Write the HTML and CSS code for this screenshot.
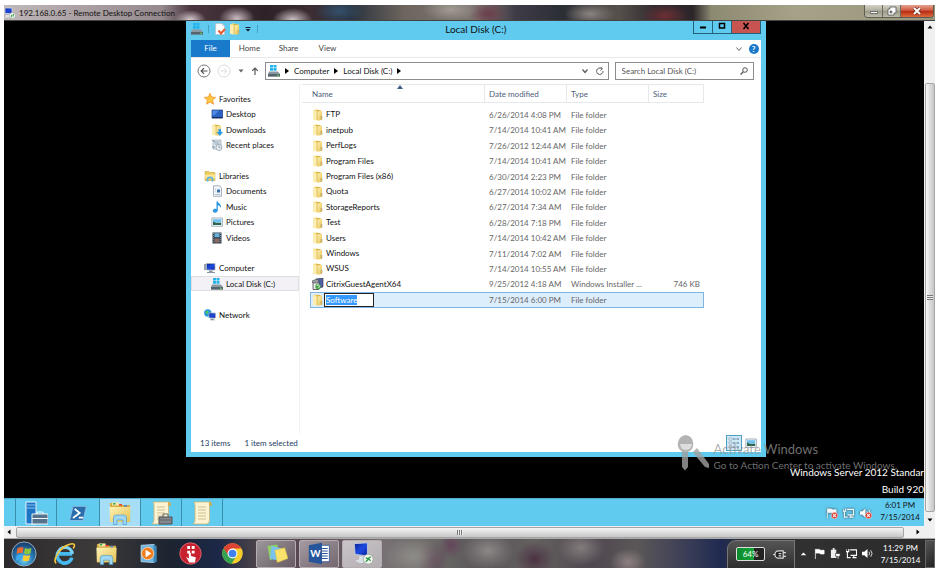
FILE: index.html
```html
<!DOCTYPE html>
<html lang="en">

<head>
    <meta charset="UTF-8">
    <meta name="viewport" content="width=device-width, initial-scale=1.0">
    <title>192.168.0.65 - Remote Desktop Connection</title>
    <link rel="stylesheet" href="styles.css">
</head>

<body>
    <!-- shared icons -->
    <svg class="sprite" aria-hidden="true">
        <defs>
            <linearGradient id="gold" x1="0" x2="1" y1="0" y2="1">
                <stop offset="0" stop-color="#fdf3b8" />
                <stop offset="1" stop-color="#e6c04c" />
            </linearGradient>
            <linearGradient id="screen" x1="0" x2="1" y1="0" y2="1">
                <stop offset="0" stop-color="#0a1c8c" />
                <stop offset=".5" stop-color="#1c4be0" />
                <stop offset="1" stop-color="#0b1f9e" />
            </linearGradient>
            <radialGradient id="orb" cx=".5" cy=".75" r=".7">
                <stop offset="0" stop-color="#6fd3f5" />
                <stop offset=".5" stop-color="#2b7cb8" />
                <stop offset="1" stop-color="#173f6e" />
            </radialGradient>
        </defs>
        <symbol id="folder" viewBox="0 0 12 12">
            <path d="M1.500 1l4-1v11l-4 0z" fill="#f3dc83" />
            <path d="M4.500 1h4v10h-4z" fill="#d9b348" />
            <path d="M1 1.500l3.500.8v9.500l-3.500-1z" fill="#fbeeb0" />
            <path d="M5.500 2.500l4.500-1v9.200l-4.500 1.300z" fill="url(#gold)" />
            <path d="M8.500 7h1.800v3.500H8.500z" fill="#c7b06b" />
        </symbol>
        <symbol id="drive" viewBox="0 0 12 12">
            <path d="M2 0h3v2.500H2zM5.500 0h3v2.500h-3zM2 3h3v2.700H2zM5.500 3h3v2.700h-3z" fill="#22b4ea" />
            <path d="M1 6.500h9l2 2.500v2.500H0V9z" fill="#8b98a3" />
            <path d="M0 9h12v2.500H0z" fill="#56636e" />
            <path d="M9 9.800h2v1H9z" fill="#5be04b" />
        </symbol>
        <symbol id="star" viewBox="0 0 12 12">
            <path d="M6 .3l1.600 3.700 4.100.4-3.100 2.700.9 4.100L6 9.100l-3.500 2.100.9-4.100L.3 4.400 4.400 4z" fill="#ffc640" stroke="#ea8a1c" stroke-width=".7" />
        </symbol>
        <symbol id="desktop" viewBox="0 0 12 12">
            <path d="M1 2h10.500v8H1z" fill="#2a62c4" stroke="#16407f" stroke-width=".7" />
            <path d="M1.500 2.500L8 2.500 3 7.500H1.500z" fill="#4f8be0" />
            <path d="M1 9h10.500v1.200H1z" fill="#152c5e" />
        </symbol>
        <symbol id="down" viewBox="0 0 12 12">
            <use href="#folder" width="12" height="12" />
            <path d="M7.500 5h2.500v3h2l-3.200 4L5.500 8h2z" fill="#2c9be8" />
        </symbol>
        <symbol id="recent" viewBox="0 0 12 12">
            <path d="M2 1h8v9H2z" fill="#dfe8ee" stroke="#9aa9b5" stroke-width=".7" />
            <path d="M3.500 3h5M3.500 5h5" stroke="#8296a8" stroke-width=".8" />
            <circle cx="8" cy="8.500" r="3" fill="#eef3f7" stroke="#8a9ba8" stroke-width=".8" />
            <path d="M8 6.800v1.900h1.500M1 1l3 2M1 8h3" stroke="#708494" stroke-width=".8" fill="none" />
        </symbol>
        <symbol id="libraries" viewBox="0 0 12 12">
            <path d="M1 1.500h4l1 1h5v8H1z" fill="#eccb58" stroke="#c39a35" stroke-width=".5" />
            <path d="M1 4.500h10v4H1z" fill="#fbe694" />
            <path d="M3.500 11.500V9a2.500 1.600 0 015 0v2.500" fill="none" stroke="#5fb2dd" stroke-width="1.800" />
        </symbol>
        <symbol id="document" viewBox="0 0 12 12">
            <path d="M2.500.8h6L10.500 3v8.300h-8z" fill="#f4f7fa" stroke="#8d9dac" stroke-width=".8" />
            <path d="M6 4.500h3v3H6z" fill="#3a6fa8" />
            <path d="M4 4h1M4 6h1M4 9.500h5" stroke="#9aabba" stroke-width=".7" />
        </symbol>
        <symbol id="music" viewBox="0 0 12 12">
            <path d="M5.500.5h1.300c.6 2 4 2.500 3 6.500C9 5 8 4.500 6.800 4.300v5c0 3-5 3-5 .6C1.800 8 4 7.500 5.500 8z" fill="#2d95e2" />
        </symbol>
        <symbol id="picture" viewBox="0 0 12 12">
            <path d="M.8 2h10.600v8.300H.8z" fill="#f8fafc" stroke="#8fa0b0" stroke-width=".8" />
            <path d="M2 3.200h8.200v3.300H2z" fill="#6cc1ee" />
            <path d="M2 5.500l3 1.200 5.200 0v2.300H2z" fill="#2b6552" />
        </symbol>
        <symbol id="video" viewBox="0 0 12 12">
            <path d="M1.500.5h9v11h-9z" fill="#33424f" />
            <path d="M3.500 1.200h5v4h-5z" fill="#68b2dc" />
            <path d="M3.500 6.500h5v4h-5z" fill="#8d6a66" />
            <path d="M2.500 1v10.500M9.500 1v10.500" stroke="#9fb0bd" stroke-width=".6" stroke-dasharray="1 1" />
        </symbol>
        <symbol id="computer" viewBox="0 0 12 12">
            <path d="M0 2h2v6H0z" fill="#98a2ad" />
            <path d="M2.500 1.500h8.500v6.500H2.500z" fill="url(#screen)" stroke="#a9b4c0" stroke-width=".8" />
            <path d="M5 8.500h3.500v1.500H11v1H3v-1h2z" fill="#8b95a1" />
        </symbol>
        <symbol id="network" viewBox="0 0 12 12">
            <circle cx="3.800" cy="4" r="3.700" fill="#2a9ae0" />
            <path d="M1.500 2.500l2.500-1 .5 2-2 2z" fill="#52c45a" />
            <path d="M5 4h6.500v5H5z" fill="url(#screen)" stroke="#a9b4c0" stroke-width=".7" />
            <path d="M7 9.500h2.500v1H11v.8H6v-.8h1z" fill="#8b95a1" />
        </symbol>
        <symbol id="installer" viewBox="0 0 12 12">
            <path d="M4 1l7-1v9l-6 1.500z" fill="#4e5fa8" stroke="#333" stroke-width=".6" />
            <path d="M1 4h6v7.500H1z" fill="#e6e9ec" stroke="#444" stroke-width=".8" />
            <path d="M0 3l5-2 2 2-1 2H1z" fill="#9aa0a6" stroke="#333" stroke-width=".5" />
            <circle cx="6" cy="8.500" r="2.700" fill="#4aa84c" />
            <path d="M5 8l1-1.500 1.500 2-1 1.500" stroke="#fff" stroke-width=".8" fill="none" />
        </symbol>
        <symbol id="props" viewBox="0 0 12 12">
            <path d="M1.500.5h6.500l2.500 2.500v8.500h-9z" fill="#fff" stroke="#b7bcc1" stroke-width=".7" />
            <path d="M8 .5V3h2.500z" fill="#cfd4d8" />
            <path d="M4.500 7.500l2.500 3 4-4.500" fill="none" stroke="#ea5a30" stroke-width="2" />
        </symbol>
        <symbol id="rdp" viewBox="0 0 12 12">
            <path d="M1 1h7v5.500H1z" fill="url(#screen)" stroke="#cfd8e4" stroke-width=".8" />
            <path d="M2 8h4v2.500H1z" fill="#dfe4ea" />
            <circle cx="8.500" cy="8.500" r="3" fill="#f2f5f2" stroke="#8a9a8a" stroke-width=".5" />
            <path d="M7 8l1.300 1L7 10.200M10 7L8.800 8.200 10 9.300" stroke="#2f9a41" fill="none" />
        </symbol>
        <symbol id="filefolder" viewBox="0 0 24 24">
            <path d="M2 2h8l1.500 2H22v17H2z" fill="#d7ac42" />
            <path d="M4 1.500h7v3H4z" fill="#f6e9a8" />
            <path d="M5 2.800h2.500" stroke="#37a548" stroke-width="1.500" />
            <path d="M11 3.800h3" stroke="#e8402f" stroke-width="1.500" />
            <path d="M16 4.800h3" stroke="#3b86d8" stroke-width="1.500" />
            <path d="M1.500 6h21l-.5 15H2z" fill="url(#gold)" />
            <path d="M5.500 23.500V17q0-3 3-3h7q3 0 3 3v6.500h-3.500V19H9v4.500z" fill="#9fd6f2" stroke="#4c9ccb" stroke-width=".7" />
        </symbol>
        <symbol id="scroll" viewBox="0 0 24 24">
            <path d="M4 1h17q-2 2-1.500 5v13q0 4-3 4H3q2-1.500 2-4V5q0-3-1-4z" fill="#fbf3d2" stroke="#cdb573" stroke-width=".8" />
            <path d="M19 1q3 0 3 3.500h-3z" fill="#d4a947" />
            <path d="M8 6h8M8 9h8M8 12h8M8 15h8M8 18h8" stroke="#ccbf93" />
        </symbol>
        <symbol id="flag" viewBox="0 0 12 12">
            <path d="M1.500 1v11M2 1.500h4l1 1h4v4H7l-1-1H2z" fill="currentColor" stroke="currentColor" stroke-width=".8" />
        </symbol>
        <symbol id="netplug" viewBox="0 0 12 12">
            <path d="M4.500 2h7v6h-6.500M7 10.500h4.500M8.500 8v2M0 1v3h3V1M1.500 4v6.500H5" fill="none" stroke="currentColor" stroke-width="1.200" />
        </symbol>
        <symbol id="speaker" viewBox="0 0 12 12">
            <path d="M0 4h2.500L6 1v10L2.500 8H0z" fill="currentColor" />
            <path d="M7.500 4q1.500 2 0 4M9.500 2.500q3 3.500 0 7" fill="none" stroke="currentColor" stroke-width=".9" />
        </symbol>
        <symbol id="error" viewBox="0 0 12 12">
            <circle cx="6" cy="6" r="5.500" fill="#dd3b32" stroke="#fff" stroke-width=".8" />
            <path d="M3.800 3.800l4.400 4.400M8.200 3.800L3.800 8.200" stroke="#fff" stroke-width="1.800" />
        </symbol>
    </svg>

    <div class="screen">
        <!-- remote desktop client title bar -->
        <header class="rdp-title">
            <svg class="icon"><use href="#rdp" /></svg>
            <span class="rdp-name">192.168.0.65 - Remote Desktop Connection</span>
            <div class="rdp-buttons">
                <button class="rdp-min" aria-label="Minimize"><svg viewBox="0 0 12 10"><path d="M2.500 5.500h7v2h-7z" fill="#fff" stroke="#555" stroke-width=".8" /></svg></button>
                <button class="rdp-max" aria-label="Restore"><svg viewBox="0 0 12 10"><path d="M4 1h6v6H8v2H2V3h2z" fill="#fff" stroke="#555" stroke-width=".8" /><path d="M4 5h2v2H4z" fill="#888" stroke="#555" stroke-width=".6" /></svg></button>
                <button class="rdp-close" aria-label="Close"><svg viewBox="0 0 12 10"><path d="M3 2l6 6M9 2L3 8" stroke="#6b2a20" stroke-width="3.200" /><path d="M3 2l6 6M9 2L3 8" stroke="#fff" stroke-width="2" /></svg></button>
            </div>
        </header>

        <div class="session">
            <div class="remote">
                <main class="desktop">
                    <!-- explorer window -->
                    <section class="explorer">
                        <div class="ex-title">
                            <div class="quick">
                                <svg class="icon"><use href="#drive" /></svg>
                                <i class="sep"></i>
                                <svg class="icon"><use href="#props" /></svg>
                                <svg class="icon"><use href="#folder" /></svg>
                                <svg class="icon small" viewBox="0 0 8 8"><path d="M1.500 2h5v1h-5zM1.500 4h5L4 6.500z" fill="#123" /></svg>
                                <i class="sep"></i>
                            </div>
                            <h1>Local Disk (C:)</h1>
                            <div class="ex-buttons">
                                <button aria-label="Minimize"><svg viewBox="0 0 10 8"><path d="M2 4.500h6v2H2z" /></svg></button>
                                <button aria-label="Maximize"><svg viewBox="0 0 10 8"><path d="M2.500 1.500h5v4.500h-5z" fill="none" stroke="#000" stroke-width="1.500" /></svg></button>
                                <button class="close" aria-label="Close"><svg viewBox="0 0 10 8"><path d="M2.500 1l5 6M7.500 1l-5 6" stroke="#000" stroke-width="1.600" /></svg></button>
                            </div>
                        </div>

                        <nav class="tabs">
                            <button class="file">File</button>
                            <button>Home</button>
                            <button>Share</button>
                            <button>View</button>
                            <svg class="icon small expand" viewBox="0 0 8 8"><path d="M1.500 2.500L4 5.500l2.500-3" fill="none" stroke="#666" /></svg>
                            <button class="help" aria-label="Help">?</button>
                        </nav>

                        <div class="address">
                            <svg class="nav-arrow" viewBox="0 0 14 14"><circle cx="7" cy="7" r="6" fill="none" stroke="#777" /><path d="M10.500 7h-6M7 4.200L4.200 7 7 9.800" fill="none" stroke="#555" stroke-width="1.200" /></svg>
                            <svg class="nav-arrow" viewBox="0 0 14 14"><circle cx="7" cy="7" r="6" fill="none" stroke="#ddd" /><path d="M3.500 7h6M7 4.200L9.800 7 7 9.800" fill="none" stroke="#ddd" /></svg>
                            <svg class="icon small" viewBox="0 0 8 8"><path d="M1.500 2.500h5L4 5.500z" fill="#666" /></svg>
                            <svg class="icon small up" viewBox="0 0 8 8"><path d="M4 8V1M1.200 3.800L4 1l2.800 2.800" fill="none" stroke="#555" stroke-width="1.200" /></svg>
                            <div class="path">
                                <svg class="icon"><use href="#drive" /></svg>
                                <svg class="tri" viewBox="0 0 4 6"><path d="M0 0l4 3-4 3z" /></svg>
                                <button>Computer</button>
                                <svg class="tri" viewBox="0 0 4 6"><path d="M0 0l4 3-4 3z" /></svg>
                                <button>Local Disk (C:)</button>
                                <svg class="tri" viewBox="0 0 4 6"><path d="M0 0l4 3-4 3z" /></svg>
                                <svg class="icon small history" viewBox="0 0 8 8"><path d="M1.500 2.500L4 5.500l2.500-3" fill="none" stroke="#555" stroke-width="1.200" /></svg>
                                <svg class="icon small refresh" viewBox="0 0 8 8"><path d="M5.500 1.500A3.200 3.200 0 107 4M4.500 0l2 1.700L4.500 3.500" fill="none" stroke="#555" stroke-width="1" /></svg>
                            </div>
                            <label class="search">
                                <input type="text" placeholder="Search Local Disk (C:)" aria-label="Search Local Disk (C:)">
                                <svg class="icon small" viewBox="0 0 8 8"><circle cx="5" cy="3" r="2.300" fill="none" stroke="#555" /><path d="M3.300 4.700L.6 7.500" stroke="#555" stroke-width="1.300" /></svg>
                            </label>
                        </div>

                        <div class="ex-body">
                            <ul class="tree">
                                <li class="root"><svg class="icon"><use href="#star" /></svg>Favorites</li>
                                <li><svg class="icon"><use href="#desktop" /></svg>Desktop</li>
                                <li><svg class="icon"><use href="#down" /></svg>Downloads</li>
                                <li><svg class="icon"><use href="#recent" /></svg>Recent places</li>
                                <li class="gap"></li>
                                <li class="root"><svg class="icon"><use href="#libraries" /></svg>Libraries</li>
                                <li><svg class="icon"><use href="#document" /></svg>Documents</li>
                                <li><svg class="icon"><use href="#music" /></svg>Music</li>
                                <li><svg class="icon"><use href="#picture" /></svg>Pictures</li>
                                <li><svg class="icon"><use href="#video" /></svg>Videos</li>
                                <li class="gap"></li>
                                <li class="root"><svg class="icon"><use href="#computer" /></svg>Computer</li>
                                <li class="current"><svg class="icon"><use href="#drive" /></svg>Local Disk (C:)</li>
                                <li class="gap"></li>
                                <li class="root"><svg class="icon"><use href="#network" /></svg>Network</li>
                            </ul>

                            <div class="files">
                                <table>
                                    <thead>
                                        <tr>
                                            <th class="c-gutter"></th>
                                            <th class="c-name">Name<svg class="sort" viewBox="0 0 6 4"><path d="M3 0l3 4H0z" fill="#3b5a82" /></svg></th>
                                            <th class="c-date">Date modified</th>
                                            <th class="c-type">Type</th>
                                            <th class="c-size">Size</th>
                                        </tr>
                                    </thead>
                                    <tbody>
                                        <tr><td></td><td><svg class="icon"><use href="#folder" /></svg>FTP</td><td>6/26/2014 4:08 PM</td><td>File folder</td><td></td></tr>
                                        <tr><td></td><td><svg class="icon"><use href="#folder" /></svg>inetpub</td><td>7/14/2014 10:41 AM</td><td>File folder</td><td></td></tr>
                                        <tr><td></td><td><svg class="icon"><use href="#folder" /></svg>PerfLogs</td><td>7/26/2012 12:44 AM</td><td>File folder</td><td></td></tr>
                                        <tr><td></td><td><svg class="icon"><use href="#folder" /></svg>Program Files</td><td>7/14/2014 10:41 AM</td><td>File folder</td><td></td></tr>
                                        <tr><td></td><td><svg class="icon"><use href="#folder" /></svg>Program Files (x86)</td><td>6/30/2014 2:23 PM</td><td>File folder</td><td></td></tr>
                                        <tr><td></td><td><svg class="icon"><use href="#folder" /></svg>Quota</td><td>6/27/2014 10:02 AM</td><td>File folder</td><td></td></tr>
                                        <tr><td></td><td><svg class="icon"><use href="#folder" /></svg>StorageReports</td><td>6/27/2014 7:34 AM</td><td>File folder</td><td></td></tr>
                                        <tr><td></td><td><svg class="icon"><use href="#folder" /></svg>Test</td><td>6/28/2014 7:18 PM</td><td>File folder</td><td></td></tr>
                                        <tr><td></td><td><svg class="icon"><use href="#folder" /></svg>Users</td><td>7/14/2014 10:42 AM</td><td>File folder</td><td></td></tr>
                                        <tr><td></td><td><svg class="icon"><use href="#folder" /></svg>Windows</td><td>7/11/2014 7:02 AM</td><td>File folder</td><td></td></tr>
                                        <tr><td></td><td><svg class="icon"><use href="#folder" /></svg>WSUS</td><td>7/14/2014 10:55 AM</td><td>File folder</td><td></td></tr>
                                        <tr><td></td><td><svg class="icon"><use href="#installer" /></svg>CitrixGuestAgentX64</td><td>9/25/2012 4:18 AM</td><td>Windows Installer ...</td><td>746 KB</td></tr>
                                        <tr class="selected"><td></td><td><svg class="icon"><use href="#folder" /></svg><input class="rename" id="rename" type="text" value="Software" aria-label="Folder name"></td><td>7/15/2014 6:00 PM</td><td>File folder</td><td></td></tr>
                                    </tbody>
                                </table>
                            </div>
                        </div>

                        <footer class="status">
                            <span>13 items</span>
                            <span>1 item selected</span>
                            <button class="view on" aria-label="Details"><svg viewBox="0 0 12 14"><path d="M1 2h3v2H1zM1 6h3v2H1zM1 10h3v2H1z" fill="#fff" stroke="#7c93a8" stroke-width=".6" /><path d="M5 3h2.500M8.500 3H11M5 7h2.500M8.500 7H11M5 11h2.500M8.500 11H11" stroke="#4d7194" /></svg></button>
                            <button class="view" aria-label="Thumbnails"><svg viewBox="0 0 12 14"><use href="#picture" width="12" height="14" /></svg></button>
                        </footer>
                    </section>

                    <!-- activation watermark -->
                    <div class="activate">
                        <svg viewBox="0 0 32 36"><path d="M9 0a9 9 0 00-4 16.500V32l3 3.500L11 32V17A9 9 0 009 0z" /><path d="M16 17l4-4 12 16v4l-4-1-10-12z" /><path d="M3 9h12a6 6 0 01-12 0z" fill="#ddd" /></svg>
                        <p><strong>Activate Windows</strong><span>Go to Action Center to activate Windows.</span></p>
                    </div>
                    <p class="build">Windows Server 2012 Standar<br>Build 920</p>
                </main>

                <div class="server-bar">
                    <button aria-label="Server Manager"><svg viewBox="0 0 24 24"><path d="M2 1h10v22H2z" fill="#1d73c4" stroke="#e6f4fd" /><path d="M3 4h8M3 7h8" stroke="#8ac3f0" /><path d="M8 13h16v10H8z" fill="#56738c" stroke="#eef6fb" /><path d="M13 13v-2h6v2M8 17.500h16" fill="none" stroke="#eef6fb" /></svg></button>
                    <button class="plain" aria-label="PowerShell"><svg viewBox="0 0 24 24"><path d="M6 4h16l-4 17H2z" fill="#2b6cab" stroke="#94c2e6" /><path d="M8 7l6 5-8 6M13 17.500h5" fill="none" stroke="#fff" stroke-width="2.200" /></svg></button>
                    <button class="open" aria-label="File Explorer"><svg><use href="#filefolder" /></svg></button>
                    <button aria-label="Script with tools"><svg viewBox="0 0 24 24"><use href="#scroll" width="24" height="24" /><path d="M10 16h13v7H10z" fill="#85898d" stroke="#4a4f54" /><path d="M14 16v-3h5v3M10 19h13" fill="none" stroke="#5f6468" /></svg></button>
                    <button aria-label="Script"><svg><use href="#scroll" /></svg></button>
                    <div class="tray">
                        <span class="badged"><svg><use href="#flag" /></svg><svg class="err"><use href="#error" /></svg></span>
                        <span class="badged"><svg><use href="#netplug" /></svg></span>
                        <span class="badged"><svg><use href="#speaker" /></svg><svg class="err"><use href="#error" /></svg></span>
                    </div>
                    <time>6:01 PM<br>7/15/2014</time>
                </div>
            </div>

            <div class="vscroll">
                <svg viewBox="0 0 8 8"><path d="M1.500 5.500h5L4 2.500z" /></svg>
                <div class="thumb"></div>
                <svg viewBox="0 0 8 8"><path d="M1.500 2.500h5L4 5.500z" /></svg>
            </div>
        </div>

        <div class="hscroll">
            <svg viewBox="0 0 8 8"><path d="M5.500 1.500v5L2.500 4z" /></svg>
            <div class="thumb"></div>
            <svg viewBox="0 0 8 8"><path d="M2.500 1.500v5L5.500 4z" /></svg>
        </div>

        <!-- local taskbar -->
        <footer class="taskbar">
            <button aria-label="Start"><svg viewBox="0 0 28 28"><circle cx="14" cy="14" r="13" fill="url(#orb)" stroke="#9db4c6" /><path d="M7 8q3-2 6.500-1l-1 6q-3-1-6.500 1z" fill="#ee6a2c" /><path d="M15 7.500q3 1.500 7 0l-1 6q-3.500 1.500-7 0z" fill="#8cc63e" /><path d="M6 15.500q3-2 6.500-1l-1 6q-3-1-6.500 1z" fill="#3fa9ec" /><path d="M13.500 15q3.500 1.500 7 0l-1 6q-3.500 1.500-7 0z" fill="#fbcb2e" /></svg></button>
            <button aria-label="Internet Explorer"><svg viewBox="0 0 28 28"><path d="M23 19A9 9 0 115.500 14.500h18" fill="none" stroke="#46b9ee" stroke-width="4.500" /><path d="M6 14.500a8.800 8.800 0 0117.500 0" fill="none" stroke="#7dd3f7" stroke-width="4" /><path d="M4 26C-1 22 8 8 17 4q8-3.500 9-.5.500 2-1.500 4.500" fill="none" stroke="#f5c53a" stroke-width="2" /></svg></button>
            <button aria-label="Windows Explorer"><svg><use href="#filefolder" /></svg></button>
            <button aria-label="Media Player"><svg viewBox="0 0 28 28"><path d="M5 4l16-1v22L5 24z" fill="#6fb4df" stroke="#b9def2" /><path d="M20 3l4 2v19l-4 1.500z" fill="#3e86b8" /><circle cx="13" cy="14" r="7.500" fill="#f07d1d" stroke="#fde0b8" /><path d="M10.500 9.500l7 4.500-7 4.500z" fill="#fff" /></svg></button>
            <button aria-label="Remote assistant"><svg viewBox="0 0 28 28"><circle cx="14" cy="14" r="13" fill="#c8202f" stroke="#e8707a" /><path d="M10 5h3.500v3.500H10zM15.500 5H19v3.500h-3.500zM10 10.500h3.500V14H10zM15.500 10.500H19V14h-3.500z" fill="#fff" /><path d="M12 13h2.500v4l6 1.500-1 6.500h-7l-4-7 3.500 2z" fill="#fff" /></svg></button>
            <button aria-label="Chrome"><svg viewBox="0 0 28 28"><circle cx="14" cy="14" r="12.500" fill="#f7cf2d" /><path d="M3.200 7.800A12.500 12.500 0 0124.800 7.800H14L8.600 17z" fill="#dd4335" /><path d="M3.200 7.800a12.500 12.500 0 009.800 18.700L18.500 17h-9z" fill="#34a352" /><circle cx="14" cy="14" r="6" fill="#fff" /><circle cx="14" cy="14" r="4.700" fill="#3f82ee" /></svg></button>
            <button class="running" aria-label="Sticky Notes"><svg viewBox="0 0 28 28"><path d="M3 5l12-2 2 16-11 3z" fill="#8ed267" /><path d="M8 5l13 3-3 15-12-3z" fill="#78c3ef" /><path d="M12 10l12-3 4 13-13 5z" fill="#f9e36c" stroke="#d8ba3c" stroke-width=".6" /></svg></button>
            <button class="running" aria-label="Word"><svg viewBox="0 0 28 28"><path d="M14 4h12v20H14z" fill="#fff" stroke="#2a5698" /><path d="M17 8h7M17 11h7M17 14h7M17 17h7M17 20h7" stroke="#2a5698" stroke-width="1.300" /><path d="M1 4l16-3v26L1 24z" fill="#26559c" /><text x="9" y="18" text-anchor="middle">W</text></svg></button>
            <button class="running active" aria-label="Remote Desktop"><svg viewBox="0 0 28 28"><path d="M4 2l16-1v16L5 15z" fill="url(#screen)" stroke="#c7d1de" /><path d="M10 17l6 1v3l5 2-9 3-7-3 5-2z" fill="#d9dfe6" /><circle cx="21" cy="21" r="6" fill="#f3f5f3" stroke="#9aa59a" /><path d="M18 19l3 2-3 3M24 18l-3 2 3 3" fill="none" stroke="#2f9a41" stroke-width="1.600" /></svg></button>

            <div class="power">
                <span class="battery">64%</span>
                <svg class="plug" viewBox="0 0 14 12"><path d="M6 2h5v8H6a4 4 0 010-8z" fill="#222" stroke="#ddd" stroke-width="1.300" /><path d="M11 4h3M11 8h3M2 6H0M6 5h3M6 7.500h3" stroke="#ddd" stroke-width="1.300" /></svg>
            </div>
            <div class="local-tray">
                <svg viewBox="0 0 12 12"><path d="M3 8h6L6 5z" fill="#fff" /></svg>
                <svg><use href="#flag" /></svg>
                <svg viewBox="0 0 12 12"><path d="M1 2h6v9H1zM3 0h2v2H3z" fill="#eee" /><path d="M7 3v3M10 3v3M6 6h5v3H9.500v3H8V9H6z" fill="#fff" stroke="#333" stroke-width=".7" /></svg>
                <svg><use href="#netplug" /></svg>
                <svg><use href="#speaker" /></svg>
            </div>
            <time>11:29 PM<br>7/15/2014</time>
            <button class="peek" aria-label="Show desktop"></button>
        </footer>
    </div>

    <script>
        // start with the new folder's name ready to be typed over
        const rename = document.getElementById('rename');
        rename.focus();
        rename.select();
    </script>
</body>

</html>
```

FILE: styles.css
```css
* {
    box-sizing: border-box;
}

body {
    margin: 0;
    background: #fff;
    font-family: Lato, "Liberation Sans", sans-serif;
    font-size: 8px;
    line-height: 12px;
    color: #111;
}

button {
    font: inherit;
    color: inherit;
    background: none;
    border: none;
    margin: 0;
    padding: 0;
}

p,
ul,
h1 {
    margin: 0;
    padding: 0;
}

svg {
    flex: none;
}

.sprite {
    position: absolute;
    width: 0;
    height: 0;
}

.icon {
    width: 12px;
    height: 12px;
}

.icon.small {
    width: 8px;
    height: 8px;
}

.screen {
    display: flex;
    flex-direction: column;
    height: 100vh;
    padding: 5px 6px 5px 4px;
}

/* remote desktop client frame */
.rdp-title {
    display: flex;
    align-items: center;
    height: 16px;
    gap: 3px;
    border-bottom: 1px solid #444;
    background:
        linear-gradient(90deg, rgba(205, 198, 198, .9), rgba(180, 172, 174, .7) 17%, rgba(0, 0, 0, 0) 20%),
        radial-gradient(16px 10px at 20% 100%, #dccfd4, rgba(216, 207, 210, 0)),
        radial-gradient(18px 12px at 25% 90%, #cbbcc2, rgba(216, 207, 210, 0)),
        radial-gradient(20px 12px at 31% 100%, #d0c4c8, rgba(216, 207, 210, 0)),
        radial-gradient(24px 12px at 36% 40%, #33506b, rgba(51, 80, 107, 0)),
        radial-gradient(28px 12px at 48% 30%, #a19b94, rgba(161, 155, 148, 0)),
        radial-gradient(20px 14px at 52% 60%, #6b3d4a, rgba(107, 61, 74, 0)),
        radial-gradient(26px 12px at 63% 60%, #8b8480, rgba(139, 132, 128, 0)),
        radial-gradient(24px 12px at 71% 70%, #6c2f33, rgba(108, 47, 51, 0)),
        linear-gradient(90deg, #4b3640 20%, #2e2228 28%, #3c2e33 33%, #27303c 37%, #6d655e 43%, #7e7672 51%, #3e3b46 55%, #2b2e35 60%, #57504a 66%, #2f2a30 70%, #2c2529 74%, #8d8a72 76%, #a5a287 85%, #9a967c);
}

.rdp-name {
    flex: 1;
}

.rdp-buttons {
    display: flex;
    align-self: flex-start;
    height: 13px;
    margin-right: 1px;
    border: 1px solid #5d5c50;
    border-top: none;
    border-radius: 0 0 4px 4px;
    overflow: hidden;
}

.rdp-buttons button {
    width: 18px;
    background: linear-gradient(#d3d2c6, #b1af9f 45%, #9a9887 50%, #bdbbab);
    border-right: 1px solid #6c6a5d;
}

.rdp-buttons svg {
    display: block;
    width: 12px;
    height: 10px;
    margin: auto;
}

.rdp-buttons .rdp-close {
    width: 32px;
    border: none;
    background: linear-gradient(#e5a18f, #cf5940 45%, #b52a12 50%, #dd6a3c);
}

.session {
    display: flex;
    flex: 1;
    min-height: 0;
}

.remote {
    display: flex;
    flex-direction: column;
    flex: 1;
    min-width: 0;
}

.desktop {
    position: relative;
    flex: 1;
    overflow: hidden;
    background: #000;
}

/* explorer window */
.explorer {
    position: absolute;
    top: 0;
    left: 182px;
    bottom: 41px;
    width: 63%;
    display: flex;
    flex-direction: column;
    padding: 0 5px;
    border-bottom: 5px solid #60caef;
    background: #60caef;
}

.ex-title {
    display: grid;
    grid-template-columns: 1fr auto 1fr;
    align-items: center;
    height: 19px;
    padding-bottom: 3px;
}

.quick {
    display: flex;
    align-items: center;
    gap: 3px;
}

.sep {
    width: 1px;
    height: 8px;
    margin: 0 2px;
    background: #4a9fc4;
}

.ex-title h1 {
    font-size: 10px;
    font-weight: normal;
    line-height: 16px;
}

.ex-buttons {
    display: flex;
    justify-self: end;
    align-self: start;
    height: 13px;
    border: 1px solid #24617a;
    border-top: none;
}

.ex-buttons button {
    width: 19px;
    border-right: 1px solid #24617a;
}

.ex-buttons svg {
    display: block;
    width: 10px;
    height: 8px;
    margin: 0 auto 3px;
}

.ex-buttons .close {
    width: 28px;
    border: none;
    background: #c75450;
}

.tabs {
    display: flex;
    align-items: center;
    height: 18px;
    padding-right: 2px;
    background: #fff;
    border-bottom: 1px solid #e8e8e8;
    color: #444;
}

.tabs button {
    width: 39px;
    line-height: 17px;
}

.tabs .file {
    background: #1979ca;
    color: #fff;
}

.tabs .expand {
    margin: 0 6px 0 auto;
}

.tabs .help {
    width: 10px;
    height: 10px;
    border-radius: 50%;
    background: #1979ca;
    color: #fff;
    font-weight: bold;
    line-height: 10px;
}

.address {
    display: flex;
    align-items: center;
    gap: 6px;
    padding: 4px 7px 4px 6px;
    background: #fff;
}

.nav-arrow {
    width: 14px;
    height: 14px;
}

.address .up {
    height: 10px;
}

.path,
.search {
    display: flex;
    align-items: center;
    height: 18px;
    padding: 0 4px 0 2px;
    border: 1px solid #8c8c8c;
}

.path {
    flex: 1;
    gap: 5px;
}

.tri {
    width: 4px;
    height: 6px;
}

.path .history {
    margin-left: auto;
}

.path .refresh {
    margin-left: 2px;
}

.search {
    width: 139px;
    padding: 0 5px 0 6px;
}

.search input {
    flex: 1;
    min-width: 0;
    padding: 0;
    border: none;
    outline: none;
    font: inherit;
    background: none;
}

.search input::placeholder {
    color: #555;
}

.ex-body {
    display: flex;
    flex: 1;
    min-height: 0;
    background: #fff;
}

.tree {
    width: 108px;
    padding-top: 7px;
    list-style: none;
}

.tree li {
    display: flex;
    align-items: center;
    height: 15px;
    padding-left: 20px;
    gap: 3px;
}

.tree li:nth-child(5n + 2),
.tree li:nth-child(5n + 4) {
    height: 16px;
}

.tree .root {
    padding-left: 13px;
}

.tree .current {
    background: #f3f1f5;
    border: 1px solid #e0dee2;
    padding-left: 19px;
}

/* file list */
.files {
    flex: 1;
    padding-left: 2px;
    border-left: 1px solid #f2f2f2;
}

table {
    table-layout: fixed;
    width: 402px;
    border-collapse: separate;
    border-spacing: 0;
}

th {
    position: relative;
    height: 19px;
    padding: 0 4px;
    border: 1px solid #e6e9ec;
    border-left: none;
    text-align: left;
    font-weight: normal;
    color: #4c607a;
}

.c-gutter {
    width: 8px;
    padding: 0;
    border-right: none;
}

.c-name {
    padding-left: 2px;
}

.c-date,
.c-type {
    width: 82px;
}

.c-size {
    width: 55px;
}

.sort {
    position: absolute;
    top: 0;
    left: 50%;
    width: 6px;
    height: 4px;
}

tbody::before {
    content: "";
    display: block;
    height: 4px;
}

td {
    height: 15px;
    padding: 0 4px;
    white-space: nowrap;
    color: #666;
}

tr:nth-child(5n + 2) td,
tr:nth-child(5n + 4) td {
    height: 16px;
}

td:first-child {
    padding: 0;
}

td:nth-child(2) {
    padding: 0 0 0 2px;
    color: #111;
}

td:last-child {
    text-align: right;
}

td .icon {
    margin-right: 2px;
    vertical-align: middle;
}

.selected td {
    height: 16px;
    background: #dcedfc;
    border: solid #7fb4e4;
    border-width: 1px 0;
}

.selected td:first-child {
    background: none;
    border: none;
}

.selected td:nth-child(2) {
    padding-left: 1px;
    border-left-width: 1px;
}

.selected td:last-child {
    border-right-width: 1px;
}

.rename {
    width: 50px;
    height: 14px;
    margin: 0 0 0 -2px;
    padding: 0 1px;
    border: 1px solid #222;
    outline: none;
    font: inherit;
    vertical-align: middle;
}

.rename::selection {
    background: #3399ff;
    color: #fff;
}

.status {
    display: flex;
    align-items: center;
    gap: 14px;
    height: 18px;
    padding: 0 4px 0 9px;
    background: #fff;
    color: #1e3c64;
}

.view {
    width: 12px;
    height: 16px;
}

.view svg {
    display: block;
    width: 12px;
    height: 14px;
}

.view.on {
    width: 16px;
    margin: 0 -11px 0 auto;
    padding: 0 1px;
    border: 1px solid #4e9fc4;
    background: #cfe8f6;
}

/* watermarks over the desktop */
.activate {
    position: absolute;
    right: 27px;
    bottom: 26px;
    display: flex;
    gap: 5px;
    color: rgba(150, 150, 150, .75);
}

.activate svg {
    width: 32px;
    height: 36px;
    fill: rgba(160, 160, 160, .8);
}

.activate strong {
    display: block;
    font-size: 13px;
    font-weight: normal;
    line-height: 20px;
    padding-top: 4px;
}

.activate span {
    font-size: 10px;
}

.build {
    position: absolute;
    right: 0;
    bottom: 0;
    font-size: 10px;
    line-height: 17px;
    text-align: right;
    color: #fff;
}

/* server taskbar */
.server-bar {
    display: flex;
    height: 28px;
    padding-left: 11px;
    background: #60caef;
    border-top: 1px solid #4ea9ca;
}

.server-bar button {
    width: 42px;
    border: solid #3a8fb0;
    border-width: 0 1px;
    margin-right: -1px;
}

.server-bar .plain {
    width: 44px;
}

.server-bar .plain svg {
    width: 20px;
    height: 20px;
}

.server-bar .open {
    background: #a5def6;
}

.server-bar button svg {
    display: block;
    width: 24px;
    height: 24px;
    margin: auto;
}

.tray {
    display: flex;
    align-items: center;
    gap: 5px;
    margin-left: auto;
    color: #f4f9fb;
}

.badged {
    position: relative;
    width: 12px;
    height: 12px;
}

.badged svg {
    width: 11px;
    height: 12px;
    filter: drop-shadow(0 0 1px #333);
}

.badged .err {
    position: absolute;
    right: 0;
    bottom: 0;
    width: 7px;
    height: 7px;
    filter: none;
}

time {
    text-align: center;
    white-space: nowrap;
}

.server-bar time {
    width: 52px;
    padding-left: 4px;
}

/* scrollbars */
.vscroll,
.hscroll {
    display: flex;
    align-items: center;
    background: #f0f0f0;
}

.vscroll {
    flex-direction: column;
    width: 11px;
    padding: 2px 0;
}

.hscroll {
    height: 13px;
    padding: 0 13px 0 1px;
    border-bottom: 1px solid #aaa;
}

.vscroll svg,
.hscroll svg {
    width: 8px;
    height: 8px;
}

.thumb {
    flex: 1;
    display: grid;
    place-items: center;
    border: 1px solid #a5a5a5;
    border-radius: 2px;
}

.thumb::after {
    content: "";
    width: 6px;
    height: 5px;
    background: repeating-linear-gradient(#777 0 1px, #eee 1px 2px);
}

.vscroll .thumb {
    width: 10px;
    margin: 52px 0 4px;
    background: linear-gradient(90deg, #f7f7f7, #dcdcdc 50%, #c6c6cb);
}

.hscroll .thumb {
    height: 11px;
    margin: 0 10px 0 3px;
    background: linear-gradient(#f5f5f5, #dedede 50%, #c6c6c6);
}

.hscroll .thumb::after {
    background: repeating-linear-gradient(90deg, #777 0 1px, #eee 1px 2px);
}

/* local taskbar */
.taskbar {
    display: flex;
    align-items: center;
    height: 29px;
    color: #fff;
    background:
        radial-gradient(30px 20px at 44% 60%, #8f8d88, rgba(143, 141, 136, 0)),
        radial-gradient(16px 18px at 46% 70%, #5a3f52, rgba(90, 63, 82, 0)),
        radial-gradient(12px 14px at 48% 20%, #64455a, rgba(100, 69, 90, 0)),
        radial-gradient(26px 20px at 52% 40%, #8b8886, rgba(139, 136, 134, 0)),
        radial-gradient(20px 18px at 57% 70%, #4b3244, rgba(75, 50, 68, 0)),
        radial-gradient(24px 18px at 62% 30%, #827c7c, rgba(130, 124, 124, 0)),
        radial-gradient(18px 14px at 67% 80%, #8d8082, rgba(141, 128, 130, 0)),
        linear-gradient(90deg, #2c2a2c, #3d3a3a 10%, #1c2430 18%, #1c2848 23%, #4a4248 27%, #5d4a56 33%, #777074 41%, #6b6a67 46%, #585257 52%, #65615f 57%, #4e4650 63%, #5b5757 68%, #3d3f56 73%, #1f2a52 77%, #333 80%, #2a2a2b);
}

.taskbar button {
    width: 42px;
    height: 28px;
}

.taskbar button:first-child {
    width: 39px;
}

.taskbar button svg {
    display: block;
    width: 23px;
    height: 23px;
    margin: auto;
}

.taskbar button:first-child svg {
    width: 26px;
    height: 26px;
}

.taskbar text {
    font-size: 12px;
    font-weight: bold;
    fill: #fff;
}

.taskbar .running {
    width: 40px;
    margin-left: 3px;
    border: 1px solid #b4adb1;
    border-radius: 2px;
    background: linear-gradient(135deg, rgba(255, 255, 255, .45), rgba(255, 255, 255, .1));
}

.taskbar .active {
    background: linear-gradient(135deg, rgba(255, 255, 255, .65), rgba(255, 255, 255, .45));
}

.power {
    display: flex;
    align-items: center;
    gap: 8px;
    height: 28px;
    margin-left: auto;
    padding: 0 8px;
    border: solid #777;
    border-width: 1px 1px 0;
    border-radius: 9px 0 0 0;
    background: linear-gradient(#555, #2e2e2e);
}

.battery {
    width: 29px;
    height: 14px;
    border: 1px solid #ddd;
    border-radius: 2px;
    background: linear-gradient(90deg, #0d8a2b, #16a53a 64%, #222 64%);
    text-align: center;
}

.plug {
    width: 13px;
    height: 11px;
}

.local-tray {
    display: flex;
    align-items: center;
    gap: 5px;
    padding-left: 3px;
}

.local-tray svg {
    width: 11px;
    height: 11px;
}

.taskbar time {
    width: 52px;
    padding-left: 3px;
}

.taskbar .peek {
    width: 10px;
    border: 1px solid #666;
    background: linear-gradient(135deg, #555, #222);
}
```
